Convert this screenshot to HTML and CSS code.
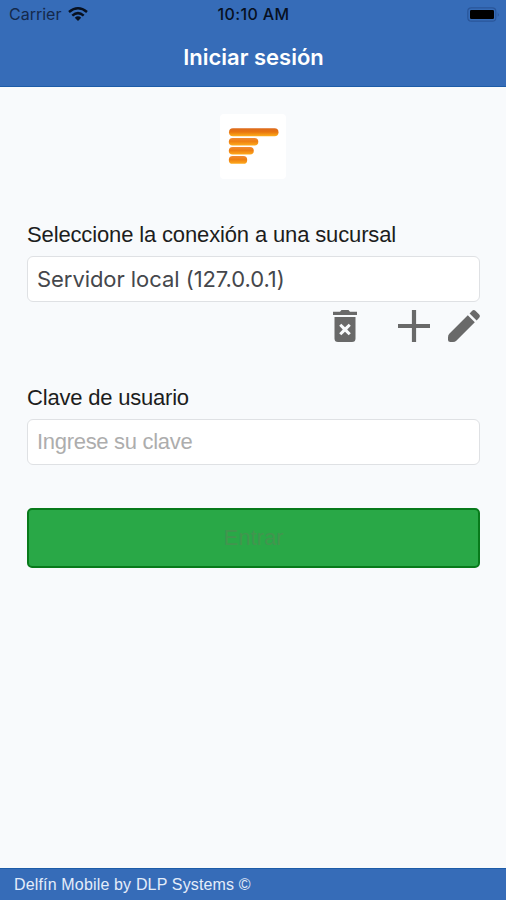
FILE: index.html
```html
<!DOCTYPE html>
<html lang="es">
<head>
<meta charset="utf-8">
<title>Iniciar sesión</title>
<link rel="stylesheet" href="styles.css">
</head>
<body>
<div class="app">
  <header class="top">
    <div class="status">
      <div class="carrier"><span>Carrier</span>
        <svg class="wifi" viewBox="0 0 20 14"><g fill="none" stroke="#07101f" stroke-width="2.5"><path d="M1 5Q10-2.6 19 5"/><path d="M4.3 8.6Q10 3.6 15.7 8.6"/></g><path d="M6.8 10.7Q10 8 13.2 10.7L10 14Z" fill="#07101f"/></svg>
      </div>
      <div class="time">10:10 AM</div>
      <svg class="battery" viewBox="0 0 33 15"><rect x=".8" y=".8" width="28" height="13.4" rx="3.5" fill="none" stroke="#2a569a" stroke-width="1.2"/><rect x="3" y="3" width="24" height="9" rx="1.3" fill="#000"/><path d="M30.8 5.2q1.5 2.3 0 4.6z" fill="#264d8a"/></svg>
    </div>
    <h1 class="title">Iniciar sesión</h1>
  </header>
  <main class="content">
    <svg class="logo" viewBox="0 0 66 65">
      <defs>
        <linearGradient id="bar" x1="0" y1="0" x2="0" y2="1"><stop offset="0" stop-color="#f08a35"/><stop offset=".45" stop-color="#ee7f12"/><stop offset="1" stop-color="#ffab1c"/></linearGradient>
        <linearGradient id="bar-top" x1="0" y1="0" x2="0" y2="1"><stop offset="0" stop-color="#dc6a1c"/><stop offset=".45" stop-color="#e8740f"/><stop offset="1" stop-color="#ffb01a"/></linearGradient>
      </defs>
      <rect width="66" height="65" rx="4" fill="#fff"/>
      <rect x="9" y="14.3" width="49.5" height="8" rx="4" fill="url(#bar-top)"/>
      <g fill="url(#bar)"><rect x="8.8" y="23.9" width="29.5" height="7.6" rx="3.8"/><rect x="8.8" y="33" width="25" height="7.6" rx="3.8"/><rect x="8.8" y="42" width="18.4" height="7.8" rx="3.9"/></g>
    </svg>
    <label class="label label-server">Seleccione la conexión a una sucursal</label>
    <div class="field"><span class="value">Servidor local (127.0.0.1)</span></div>
    <div class="actions">
      <svg class="trash" viewBox="0 0 24 32"><path fill="#696969" fill-rule="evenodd" d="M0 1.8H7L8.5 0H15.5L17 1.8H24V5H0ZM1.5 7H22.5V28.5Q22.5 32 19 32H5Q1.5 32 1.5 28.5ZM6.2 15.8L9.8 19.5L6.2 23.2L8.3 25.3L12 21.7L15.7 25.3L17.8 23.2L14.2 19.5L17.8 15.8L15.7 13.7L12 17.3L8.3 13.7Z"/></svg>
      <svg class="plus" viewBox="0 0 32 32"><path d="M16 0V32M0 16H32" stroke="#696969" stroke-width="4.2"/></svg>
      <svg class="pencil" viewBox="0 0 32 32"><path fill="#696969" d="M19.8 5.2L26.8 12.2L8.3 30.7Q7 32 5 32H2.5Q0 32 0 29.5V27.5Q0 25 1.3 23.7ZM21.6 3.4L24.2.8Q25.8-.8 27.4.8L31.2 4.6Q32.8 6.2 31.2 7.8L28.6 10.4Z"/></svg>
    </div>
    <label class="label label-key">Clave de usuario</label>
    <div class="field"><span class="placeholder">Ingrese su clave</span></div>
    <button class="submit" disabled><span>Entrar</span></button>
  </main>
  <footer class="footer"><span>Delfín Mobile by DLP Systems ©</span></footer>
</div>
</body>
</html>
```
FILE: styles.css
```css
* { box-sizing: border-box; }
body { margin: 0; font-family: "Liberation Sans", sans-serif; background: #f8fafc; }
svg { display: block; overflow: visible; }
.app { height: 900px; display: flex; flex-direction: column; }
.top { height: 87px; background: #366cb8; border-bottom: 1px solid #1d5ca8; }
.status { height: 28px; padding: 0 8px 0 9px; display: grid; grid-template-columns: 1fr auto 1fr; align-items: center; font: 16px/28px Inter, sans-serif; color: #07101f; }
.carrier { display: flex; gap: 7px; align-items: center; color: #14294b; }
.wifi { width: 20px; height: 14px; }
.time { font-weight: 500; letter-spacing: .4px; }
.battery { width: 33px; height: 15px; justify-self: end; margin-right: -2px; }
.title { margin: 0; padding: 14px 0 0 1px; font: 600 22px/30px Inter, sans-serif; color: #fff; text-align: center; }
.content { flex: 1; padding: 27px 26px 0 27px; display: flex; flex-direction: column; }
.logo { width: 66px; height: 65px; margin-left: 193px; }
.label { font-size: 22px; line-height: 28px; letter-spacing: -.14px; color: #1c1d20; white-space: nowrap; }
.label-server { margin-top: 42px; }
.label-key { margin-top: 50px; letter-spacing: -.2px; }
.field { height: 46px; margin-top: 7px; padding: 0 9px; display: flex; align-items: center; background: #fff; border: 1px solid #dfe1e4; border-radius: 6px; }
.value { font: 22px/28px Inter, sans-serif; letter-spacing: -.06px; color: #45474c; }
.placeholder { font-size: 22px; letter-spacing: -.3px; color: #adadad; }
.actions { display: flex; justify-content: flex-end; height: 32px; padding-top: 8px; }
.trash { width: 24px; height: 32px; margin-right: 41px; }
.plus { width: 32px; height: 32px; margin-right: 18px; }
.pencil { width: 32px; height: 32px; }
.submit { height: 60px; margin-top: 43px; background: #29a847; border: 2px solid #087a1b; border-radius: 5px; font: 22px "Liberation Sans", sans-serif; color: #42954f; }
.footer { height: 32px; padding-left: 14px; background: #366cb8; border-top: 1px solid #1d5ca8; color: #e4edfa; font-size: 16px; letter-spacing: .16px; line-height: 32px; }
```
